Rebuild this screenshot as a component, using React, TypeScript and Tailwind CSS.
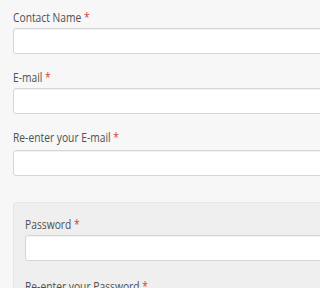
const fields = [
  { label: "Contact Name", gap: "mb-px" },
  { label: "E-mail", gap: "mb-px" },
  { label: "Re-enter your E-mail", gap: "mb-[3px]" },
];

function Label({ text, className = "" }: { text: string; className?: string }) {
  return (
    <label className={`block h-5 text-[13px] leading-5 text-[#505050] ${className}`}>
      <span className="inline-block origin-left scale-x-[0.79] whitespace-nowrap">
        {text} <span className="text-[#d9412f]">*</span>
      </span>
    </label>
  );
}

function Input() {
  return (
    <input
      type="text"
      className="block h-[26px] w-[400px] rounded-[3px] border border-[#d6d6d6] bg-white shadow-[inset_0_1px_1px_rgba(0,0,0,0.06)] outline-none"
    />
  );
}

export default function App() {
  return (
    <div
      className="h-screen w-full overflow-hidden bg-[#f7f7f7]"
      style={{ fontFamily: '"Open Sans", "Noto Sans", sans-serif' }}
    >
      <div className="w-[440px] px-[13px] pt-[7px]">
        {fields.map((f) => (
          <div key={f.label} className="mb-[13px]">
            <Label text={f.label} className={f.gap} />
            <Input />
          </div>
        ))}

        {/* password block */}
        <div className="mt-[26px] rounded-[3px] border border-[#e6e6e6] bg-[#efefef] px-[11px] pt-[11px] pb-4">
          <div className="mb-[15px]">
            <Label text="Password" className="mb-px" />
            <Input />
          </div>
          <div>
            <Label text="Re-enter your Password" className="mb-px" />
            <Input />
          </div>
        </div>
      </div>
    </div>
  );
}
